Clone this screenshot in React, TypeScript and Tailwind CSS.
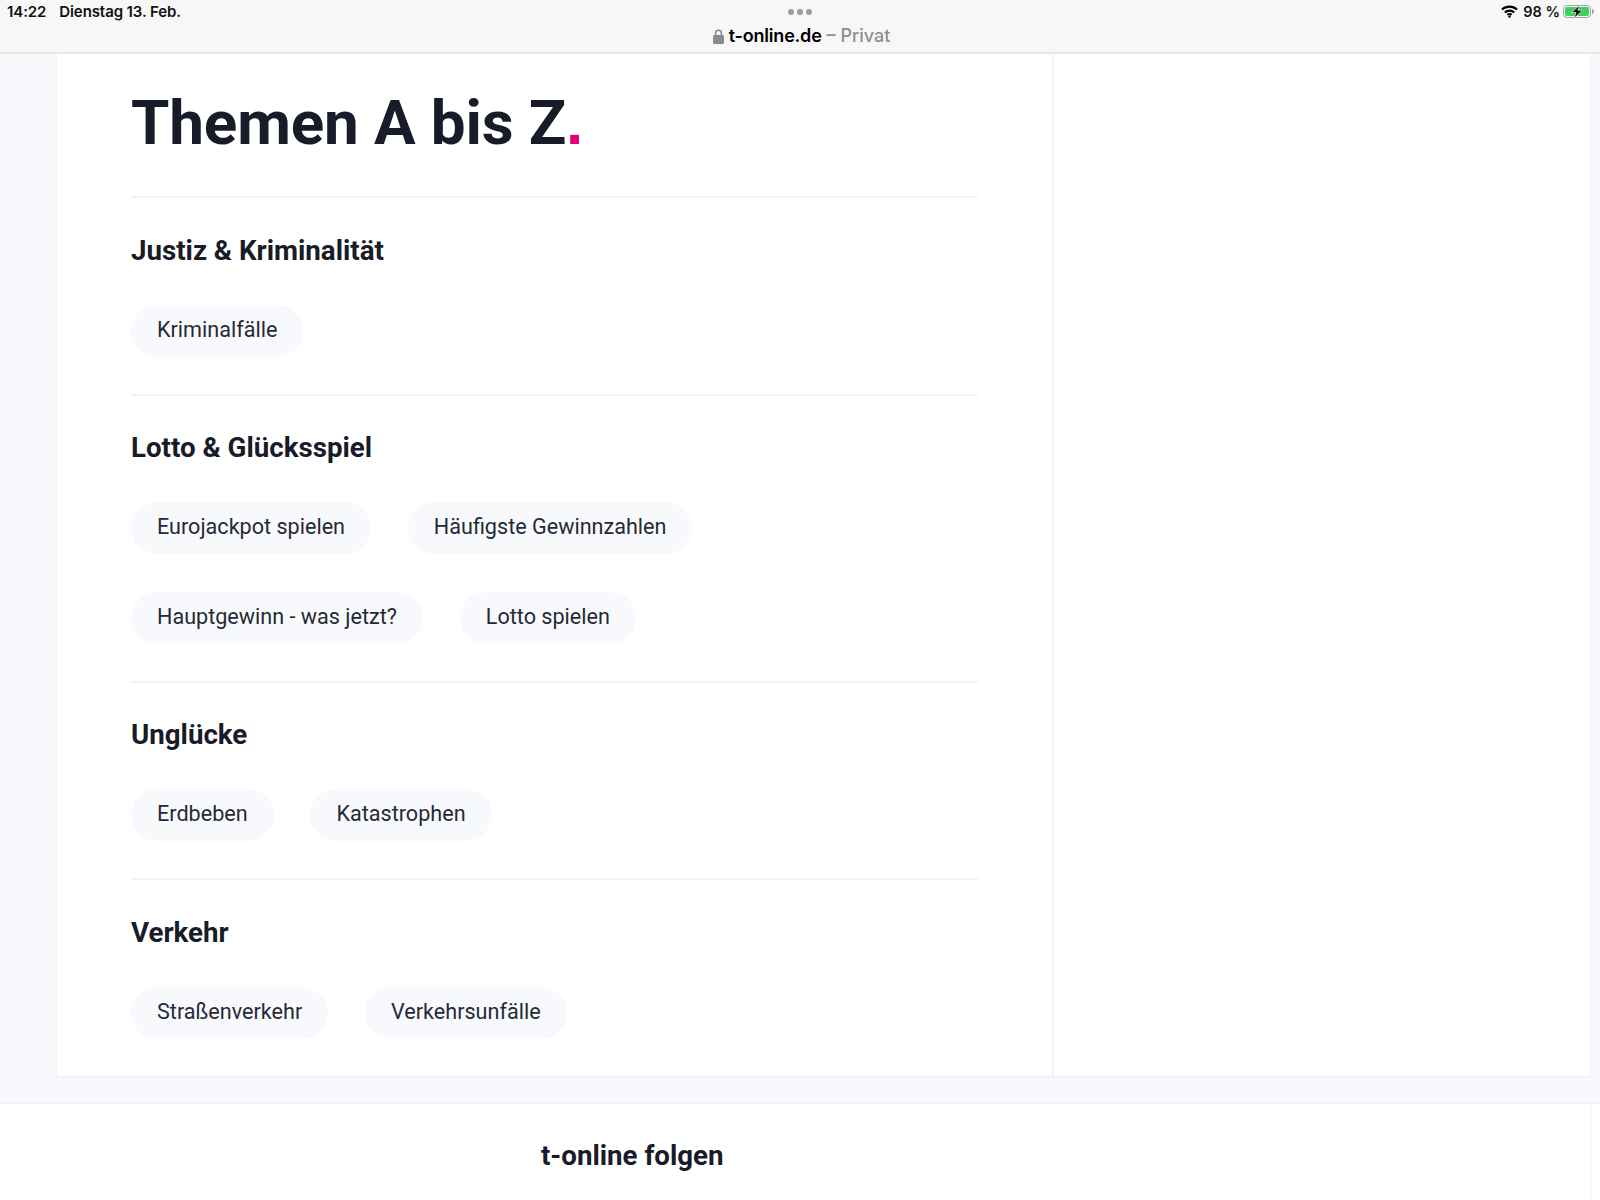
const sections: { title: string; rows: string[][] }[] = [
  { title: "Justiz & Kriminalität", rows: [["Kriminalfälle"]] },
  { title: "Lotto & Glücksspiel", rows: [["Eurojackpot spielen", "Häufigste Gewinnzahlen"], ["Hauptgewinn - was jetzt?", "Lotto spielen"]] },
  { title: "Unglücke", rows: [["Erdbeben", "Katastrophen"]] },
  { title: "Verkehr", rows: [["Straßenverkehr", "Verkehrsunfälle"]] },
];

function Wifi() {
  return (
    <svg width="17" height="13" viewBox="0 0 17 13" fill="none" stroke="#000" strokeWidth="2.1">
      <path d="M1 4.6C5.2.6 11.8.6 16 4.6" />
      <path d="M3.8 7.4c2.6-2.4 6.8-2.4 9.4 0" />
      <path d="M6.4 9.9c1.2-1 3-1 4.2 0" />
      <circle cx="8.5" cy="11.6" r="1.2" fill="#000" stroke="none" />
    </svg>
  );
}

function Battery() {
  return (
    <svg width="32" height="15" viewBox="0 0 32 15">
      <rect x="0.5" y="1.5" width="27" height="12" rx="3.5" fill="none" stroke="#a2a2a2" />
      <rect x="2" y="3" width="24" height="9" rx="2" fill="#3bd15c" />
      <path d="M29 5c1.4.3 2 1.2 2 2.5s-.6 2.2-2 2.5z" fill="#a2a2a2" />
      <path d="M17.5 0.5 8.5 8.6h4.6l-2.3 6 8.7-8.4h-4.8z" fill="#000" stroke="#f7f7f7" strokeWidth="0.7" />
    </svg>
  );
}

function Lock() {
  return (
    <svg width="11" height="15" viewBox="0 0 11 15">
      <path d="M2.6 6.5V4.1a2.9 2.9 0 0 1 5.8 0v2.4" fill="none" stroke="#8a8a8e" strokeWidth="1.6" />
      <rect x="0" y="6" width="11" height="9" rx="1.6" fill="#8a8a8e" />
    </svg>
  );
}

export default function App() {
  return (
    <div className="h-screen overflow-hidden bg-white font-['Roboto',sans-serif] text-[#181c28]">
      <header className="h-[54px] bg-[#f7f7f7] border-b-2 border-[#e6e6e6] relative flex flex-col items-center font-['Inter',sans-serif]">
        <div className="flex gap-[3px] mt-[9px] h-[6px]">
          <span className="w-[6px] h-[6px] rounded-full bg-[#9c9c9c]" />
          <span className="w-[6px] h-[6px] rounded-full bg-[#9c9c9c]" />
          <span className="w-[6px] h-[6px] rounded-full bg-[#9c9c9c]" />
        </div>
        <div className="flex items-center mt-[9px] text-[18px] leading-[24px] ml-[3px]">
          <Lock />
          <span className="ml-[5px] font-semibold tracking-[-0.2px] text-black">t-online.de</span>
          <span className="ml-[5px] font-medium text-[#8e8e92]">– Privat</span>
        </div>
        <div className="absolute left-[7px] top-[3px] flex gap-[13px] text-[15px] leading-[17px] font-semibold tracking-[-0.1px] text-[#111]">
          <span>14:22</span>
          <span>Dienstag 13. Feb.</span>
        </div>
        <div className="absolute right-[5px] top-[3px] flex items-center text-[14.5px] leading-[17px] font-semibold text-[#111]">
          <Wifi />
          <span className="ml-[5px] mr-[3px]">98 %</span>
          <Battery />
        </div>
      </header>

      <main className="bg-[#f8f9fc] pl-[56px] pr-[9px] pb-[24px] border-b-2 border-[#f1f3f8]">
        <div className="flex bg-white border-l border-r border-b-2 border-[#f1f3f8]">
          <div className="w-[997px] border-r-2 border-[#f1f3f8] pl-[74px] pr-[74px] pt-[33px] pb-[37px]">
            <h1 className="text-[62px] leading-[72px] font-bold tracking-[-0.15px] pb-[37px]">
              Themen A bis Z<span className="text-[#e20074] font-['Liberation_Sans',sans-serif]">.</span>
            </h1>
            {sections.map((s) => (
              <section key={s.title} className="border-t-2 border-[#f1f3f8] pt-[35.5px] not-last:pb-[37px]">
                <h2 className="text-[27.7px] leading-[34px] font-bold">{s.title}</h2>
                <div className="mt-[37px] flex flex-col gap-[37.5px]">
                  {s.rows.map((row, i) => (
                    <div key={i} className="flex gap-[36.8px]">
                      {row.map((p) => (
                        <span key={p} className="h-[52px] px-[26px] pb-[1.5px] rounded-full bg-[#f8f9fc] flex items-center text-[21.6px] leading-[28px] text-[#262a35]">
                          {p}
                        </span>
                      ))}
                    </div>
                  ))}
                </div>
              </section>
            ))}
          </div>
          <div className="flex-1" />
        </div>
      </main>

      <footer className="mr-[9px] h-[100px] border-r border-[#f1f3f8] pl-[541px] pt-[35px]">
        <h2 className="text-[27.7px] leading-[34px] font-bold">t-online folgen</h2>
      </footer>
    </div>
  );
}
